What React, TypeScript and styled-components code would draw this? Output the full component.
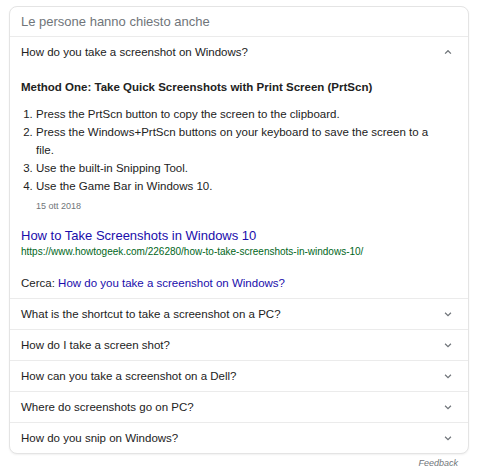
import React from "react";
import styled, { createGlobalStyle } from "styled-components";

const Global = createGlobalStyle`
  html, body { margin: 0; padding: 0; background: #fff; }
  body { font-family: "Liberation Sans", Arial, sans-serif; color: #222; }
`;

const Page = styled.div`
  padding: 6px 13px 0 9px;
  width: 460px;
`;

const Card = styled.div`
  border: 1px solid #e4e4e4;
  border-radius: 8px;
  box-shadow: 0 1px 2px rgba(0, 0, 0, 0.06);
  background: #fff;
  overflow: hidden;
`;

const Header = styled.div`
  height: 29px;
  display: flex;
  align-items: center;
  padding-left: 11px;
  font-size: 13px;
  color: #70757a;
  border-bottom: 1px solid #ebebeb;
`;

const Row = styled.div<{ $open?: boolean }>`
  height: ${(p) => (p.$open ? 29 : 30)}px;
  display: flex;
  align-items: center;
  justify-content: space-between;
  padding: 0 15px 0 11px;
  font-size: 11.5px;
  color: #222;
  border-top: ${(p) => (p.$open ? "none" : "1px solid #ebebeb")};
`;

const Chevron = styled.svg`
  width: 10px;
  height: 10px;
  flex: none;
`;

const Content = styled.div`
  padding: 13px 11px 6px 11px;
`;

const Title = styled.div`
  font-size: 11.5px;
  font-weight: bold;
  line-height: 16px;
  margin-bottom: 10px;
`;

const List = styled.ol`
  margin: 0;
  padding: 0 18px 0 15px;
  font-size: 11.5px;
  line-height: 18px;
`;

const Item = styled.li`
  padding-left: 0;
`;

const Date = styled.div`
  font-size: 9px;
  color: #70757a;
  margin: 4px 0 0 15px;
  line-height: 14px;
`;

const Link = styled.a`
  display: block;
  font-size: 13px;
  color: #1a0dab;
  text-decoration: none;
  margin-top: 14px;
  line-height: 18px;
`;

const Url = styled.div`
  font-size: 10px;
  color: #006621;
  line-height: 13px;
`;

const Search = styled.div`
  margin-top: 16px;
  font-size: 11.5px;
  line-height: 18px;
`;

const SearchLink = styled.span`
  color: #1a0dab;
`;

const Feedback = styled.div`
  text-align: right;
  font-size: 9px;
  font-style: italic;
  color: #70757a;
  padding: 4px 11px 0 0;
`;

const Up = () => (
  <Chevron viewBox="0 0 12 12">
    <path d="M2.5 8 L6 4.5 L9.5 8" fill="none" stroke="#70757a" strokeWidth="1.5" />
  </Chevron>
);

const Down = () => (
  <Chevron viewBox="0 0 12 12">
    <path d="M2.5 4.5 L6 8 L9.5 4.5" fill="none" stroke="#70757a" strokeWidth="1.5" />
  </Chevron>
);

const questions = [
  "What is the shortcut to take a screenshot on a PC?",
  "How do I take a screen shot?",
  "How can you take a screenshot on a Dell?",
  "Where do screenshots go on PC?",
  "How do you snip on Windows?",
];

export default function App() {
  return (
    <>
      <Global />
      <Page>
        <Card>
          <Header>Le persone hanno chiesto anche</Header>
          <Row $open>
            <span>How do you take a screenshot on Windows?</span>
            <Up />
          </Row>
          <Content>
            <Title>Method One: Take Quick Screenshots with Print Screen (PrtScn)</Title>
            <List>
              <Item>Press the PrtScn button to copy the screen to the clipboard.</Item>
              <Item>Press the Windows+PrtScn buttons on your keyboard to save the screen to a file.</Item>
              <Item>Use the built-in Snipping Tool.</Item>
              <Item>Use the Game Bar in Windows 10.</Item>
            </List>
            <Date>15 ott 2018</Date>
            <Link href="#">How to Take Screenshots in Windows 10</Link>
            <Url>https://www.howtogeek.com/226280/how-to-take-screenshots-in-windows-10/</Url>
            <Search>
              Cerca: <SearchLink>How do you take a screenshot on Windows?</SearchLink>
            </Search>
          </Content>
          {questions.map((q) => (
            <Row key={q}>
              <span>{q}</span>
              <Down />
            </Row>
          ))}
        </Card>
        <Feedback>Feedback</Feedback>
      </Page>
    </>
  );
}
